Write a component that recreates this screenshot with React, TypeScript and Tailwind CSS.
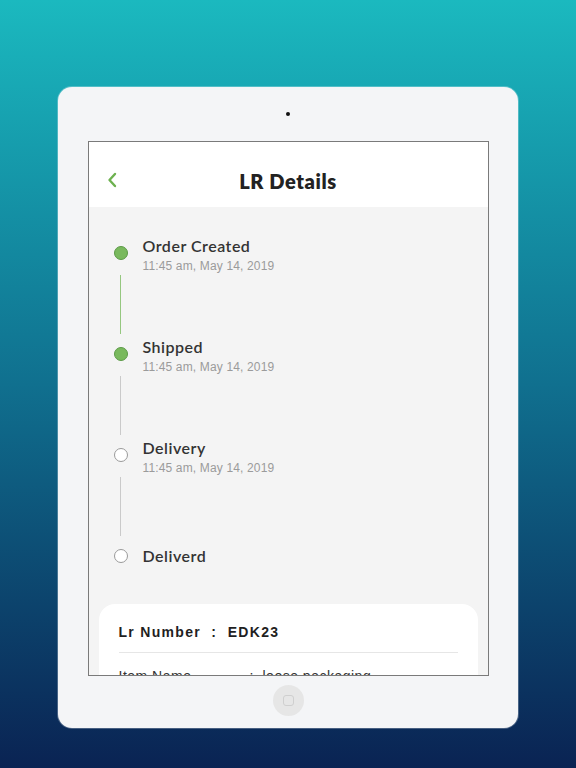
import React from 'react';

type Step = {
    title: string;
    date?: string;
    done: boolean;
    line?: 'green' | 'gray';
};

const steps: Step[] = [
    { title: 'Order Created', date: '11:45 am, May 14, 2019', done: true, line: 'green' },
    { title: 'Shipped', date: '11:45 am, May 14, 2019', done: true, line: 'gray' },
    { title: 'Delivery', date: '11:45 am, May 14, 2019', done: false, line: 'gray' },
    { title: 'Deliverd', done: false },
];

function TimelineItem({ step }: { step: Step }) {
    const last = !step.line;
    return (
        <div className={`flex ${last ? 'h-[30px]' : 'h-[101px]'}`}>
            {/* Dot + connector */}
            <div className="flex w-[14px] flex-col items-center">
                <div
                    className={`mt-[10px] h-[14px] w-[14px] shrink-0 rounded-full border ${step.done
                        ? 'border-[#5c9a47] bg-[#79b95d]'
                        : 'border-[#9a9a9a] bg-white'
                        }`}
                />
                {step.line && (
                    <div
                        className={`mt-[15px] h-[59px] w-px ${step.line === 'green' ? 'bg-[#95c77f]' : 'bg-[#cacaca]'}`}
                    />
                )}
            </div>

            {/* Text */}
            <div className={`ml-[15px] ${last ? 'pt-[7px]' : 'pt-0'}`}>
                <div className="font-['Lato'] text-[16px] leading-[20px] font-semibold tracking-[0.5px] text-[#333333]">
                    {step.title}
                </div>
                {step.date && (
                    <div className="mt-[3px] font-['Liberation_Sans'] text-[12px] leading-[14px] tracking-[0.15px] text-[#9b9b9b]">
                        {step.date}
                    </div>
                )}
            </div>
        </div>
    );
}

export default function App() {
    return (
        <div className="flex h-[768px] w-[576px] justify-center bg-gradient-to-b from-[#1bb9bf] via-[#10708f] to-[#0a2353] pt-[87px]">
            {/* iPad frame */}
            <div className="flex h-[641px] w-[460px] flex-col items-center rounded-[14px] bg-[#f4f5f7] shadow-[0_0_0_1px_rgba(255,255,255,0.25)]">
                {/* Camera */}
                <div className="mt-[25px] h-[4px] w-[4px] rounded-full bg-[#111]" />

                {/* Screen */}
                <div className="mt-[25px] flex h-[535px] w-[401px] flex-col overflow-hidden border border-[#7a7a7a] bg-[#f4f4f4]">
                    {/* Header */}
                    <div className="relative flex h-[65px] shrink-0 items-center justify-center bg-white">
                        <svg
                            className="absolute left-[18px] top-[30px]"
                            width="10"
                            height="16"
                            viewBox="0 0 10 16"
                            fill="none"
                        >
                            <path d="M8 2 L2.5 8 L8 14" stroke="#6db14f" strokeWidth="2.4" strokeLinecap="round" strokeLinejoin="round" />
                        </svg>
                        <h1 className="mt-[12px] font-['Lato'] text-[20px] font-extrabold tracking-[0.6px] text-[#222222]">
                            LR Details
                        </h1>
                    </div>

                    {/* Timeline */}
                    <div className="pl-[25px] pt-[29px]">
                        {steps.map((s) => (
                            <TimelineItem key={s.title} step={s} />
                        ))}
                    </div>

                    {/* Details card */}
                    <div className="mx-[10px] mt-[35px] shrink-0 rounded-[16px] bg-white px-[20px] pt-[18px] pb-6">
                        <div className="font-['Liberation_Sans'] text-[14px] leading-[20px] font-bold tracking-[1.3px] text-[#1f1f1f]">
                            Lr Number&nbsp;&nbsp;:&nbsp;&nbsp;EDK23
                        </div>
                        <div className="mt-[10px] h-px bg-[#e6e6e6]" />
                        <div className="mt-[13px] flex font-['Liberation_Sans'] text-[14px] leading-[20px] tracking-[0.5px] text-[#333333]">
                            <span className="w-[131px]">Item Name</span>
                            <span className="w-[13px]">:</span>
                            <span>loose packaging</span>
                        </div>
                    </div>
                </div>

                {/* Home button */}
                <div className="mt-[9px] flex h-[31px] w-[31px] items-center justify-center rounded-full bg-[#e6e6e6]">
                    <div className="h-[11px] w-[11px] rounded-[3px] border border-[#cfcfcf]" />
                </div>
            </div>
        </div>
    );
}
